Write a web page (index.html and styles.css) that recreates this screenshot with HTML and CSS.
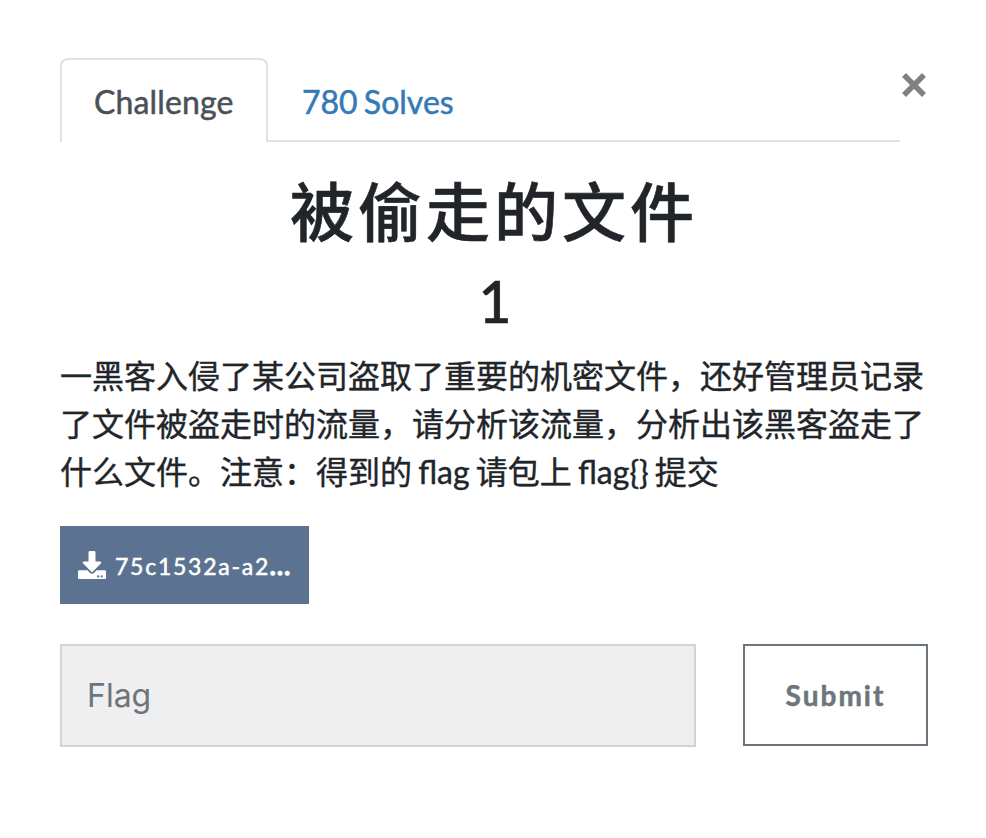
FILE: index.html
```html
<!DOCTYPE html>
<html lang="zh-CN">
<head>
<meta charset="utf-8">
<title>Challenge</title>
<link rel="stylesheet" href="styles.css">
</head>
<body>
<main class="modal">
  <header class="head">
    <nav class="tabs">
      <a class="tab active">Challenge</a>
      <a class="tab">780 Solves</a>
    </nav>
    <button class="close" aria-label="Close"><svg viewBox="0 0 28 28"><path d="M4 4L24 24M24 4L4 24"/></svg></button>
  </header>
  <h2 class="name">被偷走的文件</h2>
  <h3 class="value">1</h3>
  <p class="desc"><span>一黑客入侵了某公司盗取了重要的机密文件，还好管理员记录</span><span>了文件被盗走时的流量，请分析该流量，分析出该黑客盗走了</span><span>什么文件。注意：得到的 flag 请包上 flag{} 提交</span></p>
  <a class="file"><svg viewBox="0 0 512 512"><path d="M216 0h80c13.300 0 24 10.700 24 24v168h87.700c17.800 0 26.700 21.500 14.100 34.100L269.700 378.300c-7.500 7.500-19.800 7.500-27.300 0L90.100 226.100c-12.600-12.600-3.700-34.100 14.100-34.100H192V24c0-13.300 10.700-24 24-24zm296 376v112c0 13.300-10.700 24-24 24H24c-13.300 0-24-10.700-24-24V376c0-13.300 10.700-24 24-24h146.700l49 49c20.100 20.100 52.500 20.100 72.600 0l49-49H488c13.300 0 24 10.700 24 24zm-124 88c0-11-9-20-20-20s-20 9-20 20 9 20 20 20 20-9 20-20zm64 0c0-11-9-20-20-20s-20 9-20 20 9 20 20 20 20-9 20-20z"/></svg><span>75c1532a-a2<b>...</b></span></a>
  <div class="submit-row">
    <input class="flag" placeholder="Flag">
    <button class="submit">Submit</button>
  </div>
</main>
</body>
</html>
```
FILE: styles.css
```css
* { box-sizing: border-box; }
body { margin: 0; background: #fff; color: #212529; font-family: Lato, "Noto Sans CJK SC", sans-serif; }
.modal { padding: 58px 58px 0 60px; }
.head { display: flex; height: 84px; }
.tabs { display: flex; width: 840px; border-bottom: 2px solid #dee2e6; }
.tab { height: 84px; padding: 20px 34px 0; font-size: 32px; line-height: 48px; color: #337ab7; word-spacing: -2px; -webkit-text-stroke: 0.5px; }
.tab.active { width: 208px; padding: 18px 0 0 32px; color: #495057; background: #fff; border: 2px solid #dee2e6; border-bottom: 0; border-radius: 8px 8px 0 0; letter-spacing: 0.15px; }
.close { width: 28px; height: 28px; margin: 13px 0 0; padding: 0; border: 0; background: none; }
.close svg { display: block; width: 28px; height: 28px; fill: none; stroke: #808080; stroke-width: 5.5; }
.name { margin: 31px 0 0; font-size: 64px; line-height: 77px; font-weight: 500; letter-spacing: 4px; text-align: center; -webkit-text-stroke: 0.6px; }
.value { margin: 13px 0 0; padding-left: 2px; font-size: 57px; line-height: 76px; font-weight: 500; text-align: center; -webkit-text-stroke: 0.6px; }
.desc { margin: 13px 0 0; font-size: 32px; line-height: 48px; white-space: nowrap; word-spacing: -2px; -webkit-text-stroke: 0.4px; }
.desc span { display: block; }
.file { display: flex; align-items: center; width: 249px; height: 78px; margin-top: 30px; padding-left: 18px; gap: 9px; color: #fff; background: #5b7290; font-size: 23px; letter-spacing: 1.75px; -webkit-text-stroke: 0.5px; }
.file span { padding-top: 2px; }
.file b { -webkit-text-stroke: 1.5px; }
.file svg { width: 28px; height: 28px; fill: #fff; }
.submit-row { display: flex; justify-content: space-between; margin-top: 40px; }
.flag { width: 636px; height: 103px; padding: 0 25px 1px; border: 2px solid #ced4da; border-radius: 0; background: #efefef; font: 32px Inter, sans-serif; }
.flag::placeholder { color: #6c757d; opacity: 1; }
.submit { width: 185px; height: 102px; padding: 0; border: 2px solid #6c757d; background: #fff; color: #6c757d; font: bold 28px Lato, sans-serif; letter-spacing: 2px; -webkit-text-stroke: 0.5px; }
```
